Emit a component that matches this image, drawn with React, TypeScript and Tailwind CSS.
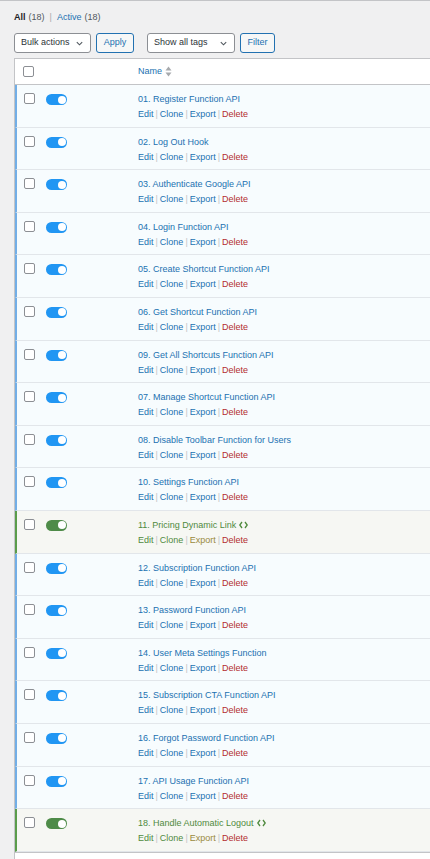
import React from 'react'

interface Snippet {
  title: string
  kind: 'php' | 'html'
}

const snippets: Snippet[] = [
  { title: '01. Register Function API', kind: 'php' },
  { title: '02. Log Out Hook', kind: 'php' },
  { title: '03. Authenticate Google API', kind: 'php' },
  { title: '04. Login Function API', kind: 'php' },
  { title: '05. Create Shortcut Function API', kind: 'php' },
  { title: '06. Get Shortcut Function API', kind: 'php' },
  { title: '09. Get All Shortcuts Function API', kind: 'php' },
  { title: '07. Manage Shortcut Function API', kind: 'php' },
  { title: '08. Disable Toolbar Function for Users', kind: 'php' },
  { title: '10. Settings Function API', kind: 'php' },
  { title: '11. Pricing Dynamic Link', kind: 'html' },
  { title: '12. Subscription Function API', kind: 'php' },
  { title: '13. Password Function API', kind: 'php' },
  { title: '14. User Meta Settings Function', kind: 'php' },
  { title: '15. Subscription CTA Function API', kind: 'php' },
  { title: '16. Forgot Password Function API', kind: 'php' },
  { title: '17. API Usage Function API', kind: 'php' },
  { title: '18. Handle Automatic Logout', kind: 'html' },
]

function Checkbox() {
  return <span className="block w-[11px] h-[11px] rounded-[2px] border border-[#8c8f94] bg-white" />
}

function Chevron() {
  return (
    <svg width="9" height="9" viewBox="0 0 10 10" fill="none" stroke="#50575e" strokeWidth="1.2">
      <polyline points="2 3.5 5 6.5 8 3.5" />
    </svg>
  )
}

function CodeIcon() {
  return (
    <svg width="9" height="8" viewBox="0 0 9 8" fill="none" stroke="currentColor" strokeWidth="1.3" className="ml-[3px]">
      <polyline points="3 1 0.8 4 3 7" />
      <polyline points="6 1 8.2 4 6 7" />
    </svg>
  )
}

function Toggle({ green }: { green: boolean }) {
  return (
    <span
      className={`flex items-center justify-end w-[21px] h-[11px] rounded-full pr-[1.5px] ${
        green ? 'bg-[#4e8b48]' : 'bg-[#2196f3]'
      }`}
    >
      <span className="block w-[8px] h-[8px] rounded-full bg-white" />
    </span>
  )
}

function Sep() {
  return <span className="text-[#c3c4c7] mx-[2px]">|</span>
}

export default function App() {
  return (
    <div
      className="w-[430px] h-[859px] overflow-hidden bg-[#f0f0f1] border-t border-[#c3c4c7] text-[9px] text-[#3c434a]"
      style={{ fontFamily: '"Liberation Sans", Arial, sans-serif' }}
    >
      <div className="pl-[14px]">
        {/* status filter */}
        <div className="pt-[6px] h-[27px] flex items-center leading-none">
          <span className="font-bold text-[#1d2327]">All</span>
          <span className="text-[#50575e] ml-[3px]">(18)</span>
          <span className="text-[#a7aaad] mx-[5px]">|</span>
          <span className="text-[#2271b1]">Active</span>
          <span className="text-[#50575e] ml-[3px]">(18)</span>
        </div>

        {/* bulk / tag filters */}
        <div className="flex items-center h-[20px] mt-[5px]">
          <div className="flex items-center justify-between w-[77px] h-[20px] px-[6px] bg-white border border-[#8c8f94] rounded-[3px] text-[#2c3338]">
            <span>Bulk actions</span>
            <Chevron />
          </div>
          <div className="ml-[5px] flex items-center justify-center w-[38px] h-[20px] bg-[#f6f7f7] border border-[#2271b1] rounded-[3px] text-[#2271b1]">
            Apply
          </div>
          <div className="ml-[13px] flex items-center justify-between w-[88px] h-[20px] px-[6px] bg-white border border-[#8c8f94] rounded-[3px] text-[#2c3338]">
            <span>Show all tags</span>
            <Chevron />
          </div>
          <div className="ml-[5px] flex items-center justify-center w-[35px] h-[20px] bg-[#f6f7f7] border border-[#2271b1] rounded-[3px] text-[#2271b1]">
            Filter
          </div>
        </div>

        {/* table */}
        <div className="mt-[5px] border-l border-t border-[#c3c4c7] bg-white">
          <div className="flex items-center h-[26px] border-b border-[#c3c4c7]">
            <div className="w-[123px] pl-[8px]">
              <Checkbox />
            </div>
            <div className="flex items-center text-[#2271b1]">
              <span>Name</span>
              <svg width="7" height="11" viewBox="0 0 7 11" className="ml-[3px]">
                <polygon points="3.5 0.5 6.5 4.5 0.5 4.5" fill="#a7aaad" />
                <polygon points="0.5 6.5 6.5 6.5 3.5 10.5" fill="#a7aaad" />
              </svg>
            </div>
          </div>

          {snippets.map((s, i) => {
            const green = s.kind === 'html'
            const text = green ? 'text-[#4f8a3d]' : 'text-[#2271b1]'
            return (
              <div
                key={i}
                className={`flex h-[42.6px] border-b border-l-2 ${
                  green ? 'bg-[#f6f7f3] border-l-[#5a9c4b]' : 'bg-[#f7fcfe] border-l-[#72aee6]'
                } border-b-[#e2e6ea]`}
              >
                <div className="w-[29px] pl-[7px] pt-[8px]">
                  <Checkbox />
                </div>
                <div className="w-[92px] pt-[9px]">
                  <Toggle green={green} />
                </div>
                <div className="pt-[7px] leading-[14px]">
                  <div className={`${text} flex items-center`}>
                    {s.title}
                    {green && <CodeIcon />}
                  </div>
                  <div className="mt-[1px]">
                    <span className={text}>Edit</span>
                    <Sep />
                    <span className={text}>Clone</span>
                    <Sep />
                    <span className={green ? 'text-[#9a8a3c]' : text}>Export</span>
                    <Sep />
                    <span className="text-[#b32d2e]">Delete</span>
                  </div>
                </div>
              </div>
            )
          })}
          <div className="h-[20px] border-t border-[#c3c4c7] bg-white" />
        </div>
      </div>
    </div>
  )
}
